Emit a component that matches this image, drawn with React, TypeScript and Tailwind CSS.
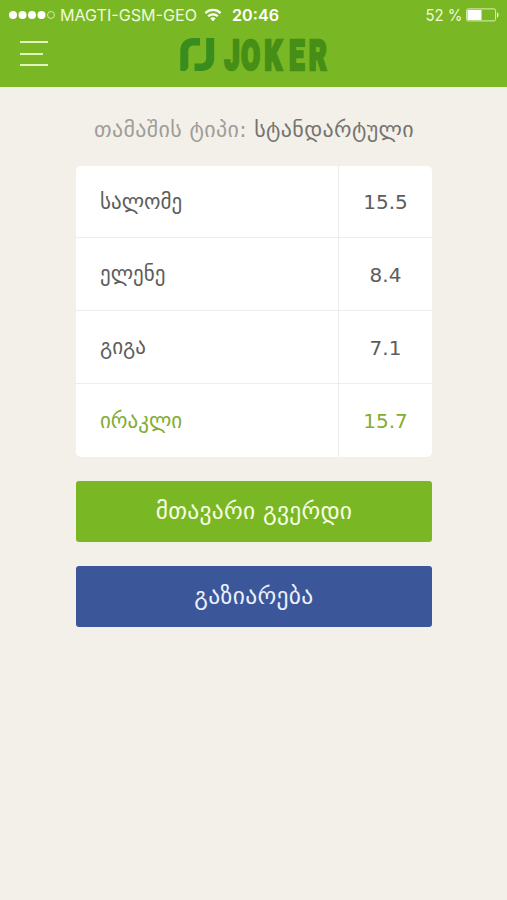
const sans = "font-['DejaVu_Sans',sans-serif]";

const scores = [
  { name: 'სალომე', score: '15.5', leader: false },
  { name: 'ელენე', score: '8.4', leader: false },
  { name: 'გიგა', score: '7.1', leader: false },
  { name: 'ირაკლი', score: '15.7', leader: true },
];

function StatusBar() {
  return (
    <div className="flex h-[29px] items-center pl-[9px] pr-[7px] font-['Inter',sans-serif] text-[16px] text-[#eefbd8]">
      <svg width="47" height="10" viewBox="0 0 47 10" fill="#fff">
        <circle cx="4" cy="5" r="4" />
        <circle cx="13.5" cy="5" r="4" />
        <circle cx="23" cy="5" r="4" />
        <circle cx="32.5" cy="5" r="4" />
        <circle cx="42" cy="5" r="3.5" fill="none" stroke="#d9f0b0" strokeWidth="0.9" />
      </svg>
      <svg className="ml-1 overflow-visible" width="138" height="20" fill="currentColor">
        <text x="0" y="16" textLength="137" lengthAdjust="spacingAndGlyphs">MAGTI-GSM-GEO</text>
      </svg>
      <svg className="ml-[6px]" width="18" height="14" viewBox="0 0 18 14" fill="none" stroke="#fff" strokeWidth="2.3">
        <path d="M1.4 5.1a10.8 10.8 0 0 1 15.2 0" />
        <path d="M4.2 8.3a6.8 6.8 0 0 1 9.6 0" />
        <path d="M9 13.3 6.3 10.6a3.8 3.8 0 0 1 5.4 0z" fill="#fff" stroke="none" />
      </svg>
      <svg className="ml-[10px] overflow-visible" width="48" height="20" fill="#fff">
        <text x="0" y="16" fontWeight="600" textLength="47" lengthAdjust="spacingAndGlyphs">20:46</text>
      </svg>
      <svg className="ml-auto overflow-visible" width="38" height="20" fill="currentColor">
        <text x="0.5" y="16" textLength="37" lengthAdjust="spacingAndGlyphs">52 %</text>
      </svg>
      <svg className="ml-[3px]" width="34" height="14" viewBox="0 0 34 14" fill="none">
        <rect x="0.6" y="0.9" width="29" height="12" rx="1.5" stroke="#d9f0b0" />
        <path d="M1.5 2h14v10h-14z" fill="#fff" />
        <path d="M31 4.5c2 .5 2 4.5 0 5z" fill="#eefbd8" />
      </svg>
    </div>
  );
}

function Logo() {
  return (
    <svg className="overflow-visible" width="150" height="34" viewBox="0 0 150 34" role="img" aria-label="Joker">
      <g fill="#398c1e">
        <path d="M0.3 33V13C0.3 5 5.500 0 13 0h7v7.500h-5.500c-4.500 0-6.200 2-6.200 6v16.500l-3 3z" />
        <path d="M34.200 0v20c0 8-5 13-12.500 13H14.500v-7.500h5.500c4.500 0 6.200-2 6.200-6V0z" />
      </g>
      <text
        transform="translate(0 31.5) scale(0.66 1)"
        x="67 92.5 127.5 165 195"
        y="0"
        fill="#458f17"
        stroke="#458f17"
        strokeWidth="2.5"
        fontSize="42"
        fontWeight="900"
        fontFamily="Roboto, sans-serif"
      >
        JOKER
      </text>
    </svg>
  );
}

export default function App() {
  return (
    <div className={`min-h-[900px] bg-[#f3f0ea] ${sans}`}>
      <header className="h-[87px] bg-[#7ab724]">
        <StatusBar />
        <div className="flex h-[58px] items-start pl-5">
          <button className="mt-3 flex w-7 flex-col gap-[9.5px]" aria-label="Menu">
            <span className="h-[2px] w-7 bg-[#e2f6bc]" />
            <span className="h-[2px] w-[23px] bg-[#e2f6bc]" />
            <span className="h-[2px] w-7 bg-[#e2f6bc]" />
          </button>
          <div className="ml-[132px] mt-[9px]">
            <Logo />
          </div>
        </div>
      </header>
      <main className="ml-[76px] w-[356px]">
        <h1 className="flex h-[79px] items-center justify-center whitespace-pre pt-[5px] text-[22px] tracking-[0.34px] text-[#a09d98]">
          თამაშის ტიპი: <span className="text-[#77746f]">სტანდარტული</span>
        </h1>
        <div className="divide-y divide-[#ededec] overflow-hidden rounded-[5px] bg-white">
          {scores.map((row) => (
            <div
              key={row.name}
              className={`flex h-[73px] items-stretch first:h-[72px] ${row.leader ? 'text-[#83ac32]' : 'text-[#5d5d5d]'}`}
            >
              <div className="flex w-[263px] items-center border-r border-[#ededec] pl-6 pt-[2px] text-[21px]">{row.name}</div>
              <div className="flex flex-1 items-center justify-center pt-px text-[20px]">{row.score}</div>
            </div>
          ))}
        </div>
        <button className="mt-6 block h-[61px] w-full rounded-[3px] bg-[#7ab724] text-[23.5px] tracking-[0.25px] text-[#f5fde4]">
          მთავარი გვერდი
        </button>
        <button className="mt-6 block h-[61px] w-full rounded-[3px] bg-[#3c5799] text-[23.5px] tracking-[0.35px] text-[#eaf0ff]">
          გაზიარება
        </button>
      </main>
    </div>
  );
}
